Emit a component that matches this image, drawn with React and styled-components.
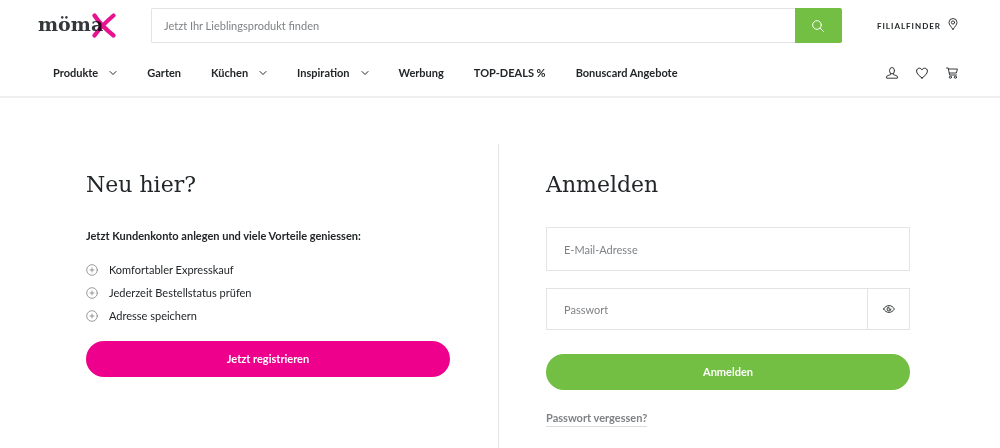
import React, { useState } from 'react'
import styled, { createGlobalStyle } from 'styled-components'

const GlobalStyle = createGlobalStyle`
*, *::before, *::after{
  box-sizing: border-box;
}
body{
  margin: 0;
  background: #fff;
  color: #222628;
  font-family: Lato, 'Open Sans', sans-serif;
  font-size: 11px;
  line-height: 16px;
}
button, input{
  font: inherit;
  color: inherit;
}
a{
  color: inherit;
  text-decoration: none;
}
`

const Page = styled.div`
display: flex;
flex-direction: column;
min-height: 100vh;
`

const Header = styled.header`
padding: 8px 42px 15px 38px;
border-bottom: 2px solid #f0f0f0;
`

const TopBar = styled.div`
display: flex;
align-items: center;
gap: 35px;
`

const Logo = styled.a`
position: relative;
display: block;
width: 78px;
height: 35px;
color: #33383a;
font-family: 'DejaVu Serif', serif;
font-size: 19px;
font-weight: 700;
line-height: 32px;

svg{
  position: absolute;
  top: 5px;
  right: 0;
  mix-blend-mode: multiply;
}
`

const Search = styled.form`
flex: 1;
display: flex;
height: 35px;
`

const SearchInput = styled.input`
flex: 1;
min-width: 0;
padding: 0 12px;
border: 1px solid #e3e3e3;
border-right: none;
border-radius: 2px 0 0 2px;
outline: none;

&::placeholder{
  color: #7f8285;
  opacity: 1;
}
`

const SearchButton = styled.button`
display: flex;
align-items: center;
justify-content: center;
width: 47px;
padding: 0;
border: none;
border-radius: 0 2px 2px 0;
background: #72bf44;
color: #fff;
cursor: pointer;
`

const StoreFinder = styled.a`
display: flex;
align-items: center;
gap: 7px;
font-size: 8px;
font-weight: 700;
letter-spacing: 1px;
text-transform: uppercase;

svg{
  margin-bottom: 4px;
}
`

const NavBar = styled.div`
display: flex;
align-items: center;
justify-content: space-between;
margin-top: 22px;
padding-left: 15px;
`

const Nav = styled.nav`
display: flex;
gap: 30px;
`

const NavLink = styled.a`
display: flex;
align-items: center;
gap: 11px;
font-weight: 700;
white-space: nowrap;
`

const UserLinks = styled.div`
display: flex;
align-items: center;
gap: 18px;

a{
  display: flex;
}
`

const Main = styled.main`
flex: 1;
display: grid;
grid-template-columns: 1fr 1fr;
padding: 46px 90px 0 86px;
`

const Column = styled.section`
padding: ${props => (props.$divided ? '0 0 20px 47px' : '0 48px 20px 0')};
border-left: ${props => (props.$divided ? '1px solid #e3e3e3' : 'none')};
`

const Title = styled.h1`
margin: 0;
padding: 25px 0 23px;
font-family: 'DejaVu Serif', serif;
font-size: 22px;
font-weight: 400;
line-height: 32px;
`

const Lead = styled.p`
margin: 4px 0 14px;
font-weight: 700;
`

const Benefits = styled.ul`
margin: 0 0 14px;
padding: 0;
list-style: none;
`

const Benefit = styled.li`
display: flex;
align-items: center;
gap: 11px;
height: 23px;

svg{
  color: #7f8285;
}
`

const PillButton = styled.button`
display: block;
width: 100%;
height: 36px;
padding: 0;
border: none;
border-radius: 18px;
background: ${props => (props.$primary ? '#ef008c' : '#72bf44')};
color: #fff;
font-weight: 700;
cursor: pointer;
`

const Form = styled.form`
padding-top: 3px;
`

const Field = styled.div`
display: flex;
height: ${props => (props.$tall ? '44px' : '42px')};
margin-bottom: ${props => (props.$tall ? '17px' : '24px')};
border: 1px solid #e3e3e3;
`

const TextInput = styled.input`
flex: 1;
min-width: 0;
padding: 2px 17px 0;
border: none;
outline: none;
background: transparent;

&::placeholder{
  color: #7f8285;
  opacity: 1;
}
`

const ToggleButton = styled.button`
display: flex;
align-items: center;
justify-content: center;
width: 42px;
padding: 0;
border: none;
border-left: 1px solid #e3e3e3;
background: transparent;
cursor: pointer;
`

const ForgotLink = styled.a`
display: inline-block;
margin-top: 20px;
border-bottom: 1px solid #dcdcdc;
color: #7f8285;
font-weight: 700;
`

const Icon = ({ children, width = 12, height = 12, box = '0 0 12 12', stroke = 1 }) => (
    <svg width={width} height={height} viewBox={box} fill="none" stroke="currentColor" strokeWidth={stroke} strokeLinecap="round" strokeLinejoin="round" aria-hidden="true">
        {children}
    </svg>
)

const Chevron = () => (
    <Icon width={8} height={6} box="0 0 8 6">
        <path d="M1 1.5 4 4.5 7 1.5" />
    </Icon>
)

const PlusCircle = () => (
    <Icon stroke={0.8}>
        <circle cx="6" cy="6" r="5.3" />
        <path d="M6 4v4M4 6h4" />
    </Icon>
)

const navItems = [
    { name: 'Produkte', more: true },
    { name: 'Garten' },
    { name: 'Küchen', more: true },
    { name: 'Inspiration', more: true },
    { name: 'Werbung' },
    { name: 'TOP-DEALS %' },
    { name: 'Bonuscard Angebote' },
]

const benefits = ['Komfortabler Expresskauf', 'Jederzeit Bestellstatus prüfen', 'Adresse speichern']

const App = () => {

    const [visible, setVisible] = useState(false);

    const stop = (e) => e.preventDefault();

    return (
        <Page>
            <GlobalStyle />
            <Header>
                <TopBar>
                    <Logo href="#">
                        möma
                        <svg width="24" height="25" viewBox="0 0 24 25" fill="none" stroke="#e6148f" strokeWidth="4.2" strokeLinecap="round" aria-hidden="true">
                            <path d="M2.500 2.500C7 9.500 14 16.500 21.500 22.500M21.500 2.500C15 8 8 15 2.500 22.500" />
                        </svg>
                    </Logo>
                    <Search onSubmit={stop}>
                        <SearchInput type="search" aria-label="Suche" placeholder="Jetzt Ihr Lieblingsprodukt finden" />
                        <SearchButton aria-label="Suchen">
                            <Icon>
                                <circle cx="5" cy="5" r="4.300" />
                                <path d="m8.200 8.200 3.200 3.200" />
                            </Icon>
                        </SearchButton>
                    </Search>
                    <StoreFinder href="#">
                        Filialfinder
                        <Icon width={10} height={12} box="0 0 10 12" stroke={0.9}>
                            <path d="M5 11.400C3 8.500 1 6.500 1 4.500a4 4 0 0 1 8 0c0 2-2 4-4 6.900Z" />
                            <circle cx="5" cy="4.500" r="1.600" />
                        </Icon>
                    </StoreFinder>
                </TopBar>
                <NavBar>
                    <Nav>
                        {navItems.map(item => (
                            <NavLink href="#" key={item.name}>
                                {item.name}
                                {item.more ? <Chevron /> : null}
                            </NavLink>
                        ))}
                    </Nav>
                    <UserLinks>
                        <a href="#" aria-label="Mein Konto">
                            <Icon stroke={0.9}>
                                <ellipse cx="6" cy="3.700" rx="2.500" ry="3.200" />
                                <path d="M4.600 6.600v1.100L1.800 8.500C1 8.700.6 9.200.6 10v1.200h10.800V10c0-.8-.4-1.300-1.200-1.500L7.400 7.700V6.600" />
                            </Icon>
                        </a>
                        <a href="#" aria-label="Merkliste">
                            <Icon>
                                <path d="M6 11C3 8.800.6 6.600.6 4.100.6 2.400 1.800 1.200 3.300 1.200 4.500 1.200 5.500 1.900 6 3c.5-1.100 1.500-1.800 2.700-1.800 1.500 0 2.700 1.200 2.700 2.900C11.400 6.600 9 8.800 6 11Z" />
                            </Icon>
                        </a>
                        <a href="#" aria-label="Warenkorb">
                            <Icon stroke={0.9}>
                                <path d="M.5 1h1.700l1.400 7h6.800M2.500 2h8.900l-1 4H3.300" />
                                <circle cx="4.400" cy="10.200" r="1.100" />
                                <circle cx="9.400" cy="10.200" r="1.100" />
                            </Icon>
                        </a>
                    </UserLinks>
                </NavBar>
            </Header>
            <Main>
                <Column>
                    <Title>Neu hier?</Title>
                    <Lead>Jetzt Kundenkonto anlegen und viele Vorteile geniessen:</Lead>
                    <Benefits>
                        {benefits.map(text => (
                            <Benefit key={text}><PlusCircle />{text}</Benefit>
                        ))}
                    </Benefits>
                    <PillButton type="button" $primary>Jetzt registrieren</PillButton>
                </Column>
                <Column $divided>
                    <Title as="h2">Anmelden</Title>
                    <Form onSubmit={stop}>
                        <Field $tall>
                            <TextInput type="email" aria-label="E-Mail-Adresse" placeholder="E-Mail-Adresse" />
                        </Field>
                        <Field>
                            <TextInput type={visible ? 'text' : 'password'} aria-label="Passwort" placeholder="Passwort" />
                            <ToggleButton type="button" aria-label="Passwort anzeigen" onClick={() => setVisible(!visible)}>
                                <Icon width={12} height={8} box="0 0 12 8" stroke={0.9}>
                                    <path d="M.6 4C2 1.800 3.800.6 6 .6S10 1.800 11.400 4C10 6.200 8.200 7.400 6 7.400S2 6.200.6 4Z" />
                                    <path d="M6 2a2 2 0 1 0 2 2M6 3.200v1h1" />
                                </Icon>
                            </ToggleButton>
                        </Field>
                        <PillButton>Anmelden</PillButton>
                    </Form>
                    <ForgotLink href="#">Passwort vergessen?</ForgotLink>
                </Column>
            </Main>
        </Page>
    )
}

export default App
